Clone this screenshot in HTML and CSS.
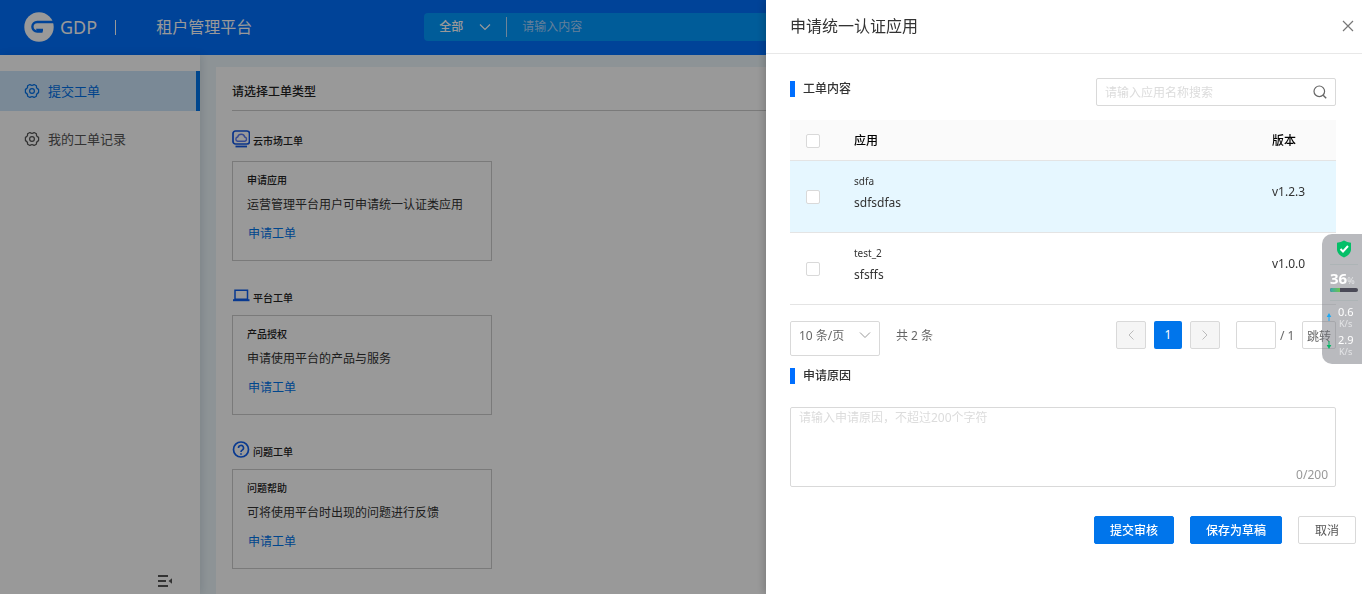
FILE: index.html
```html
<!DOCTYPE html>
<html lang="zh-CN">
<head>
<meta charset="utf-8">
<title>租户管理平台</title>
<link rel="stylesheet" href="styles.css">
</head>
<body>
<div class="app">
  <header class="topbar">
    <svg class="logo" viewBox="0 0 30 30" aria-hidden="true">
      <circle cx="15" cy="15" r="14.7" fill="#fff"/>
      <path d="M30 10H13.200a4.800 4.800 0 0 0 0 9.600H18.500" fill="none" stroke="#0070fd" stroke-width="2.400"/>
      <path d="M12 16.700h7v2.900h-6z" fill="#0070fd"/>
    </svg>
    <span class="brand">GDP</span>
    <span class="bar"></span>
    <h1 class="product">租户管理平台</h1>
    <form class="search">
      <span class="scope">
        <select class="scope-select" aria-label="范围"><option>全部</option></select>
        <svg class="chevron" viewBox="0 0 12 12" aria-hidden="true"><path d="M1 3.500l5 5 5-5" fill="none" stroke="#fff" stroke-width="1.200"/></svg>
      </span>
      <input class="search-input" type="text" placeholder="请输入内容" aria-label="搜索内容">
    </form>
  </header>
  <div class="workspace">
    <nav class="sidebar">
      <a class="nav-item active" href="#">
        <svg class="gear" viewBox="0 0 16 16" aria-hidden="true"><path d="M5.900 1.500Q8 3.200 10.100 1.500L12.400 2.800Q12 5.300 14.600 6.400V9.600Q12 10.700 12.400 13.200L10.100 14.500Q8 12.800 5.900 14.500L3.600 13.200Q4 10.700 1.400 9.600V6.400Q4 5.300 3.600 2.800Z" stroke-linejoin="round"/><circle cx="8" cy="8" r="2.400"/></svg>
        提交工单</a>
      <a class="nav-item" href="#">
        <svg class="gear" viewBox="0 0 16 16" aria-hidden="true"><path d="M5.900 1.500Q8 3.200 10.100 1.500L12.400 2.800Q12 5.300 14.600 6.400V9.600Q12 10.700 12.400 13.200L10.100 14.500Q8 12.800 5.900 14.500L3.600 13.200Q4 10.700 1.400 9.600V6.400Q4 5.300 3.600 2.800Z" stroke-linejoin="round"/><circle cx="8" cy="8" r="2.400"/></svg>
        我的工单记录</a>
      <button class="collapse" type="button" aria-label="收起菜单">
        <svg viewBox="0 0 16 14" aria-hidden="true"><path d="M1 2h10M1 7h8M1 12h10" fill="none" stroke="#555" stroke-width="1.800"/><path d="M15 4.200v5.600l-3.500-2.800z" fill="#555"/></svg>
      </button>
    </nav>
    <main class="content">
      <section class="panel">
        <h2 class="panel-title">请选择工单类型</h2>
        <section class="group market">
          <h3 class="group-title">
            <svg viewBox="0 0 18 18" aria-hidden="true"><rect x="1" y="1" width="16.500" height="13" rx="2.500" fill="none" stroke="#1257e6" stroke-width="1.700"/><path d="M5.500 11.300a2.200 2.200 0 0 1 .2-4.300 3.600 3.600 0 0 1 7 0 2.200 2.200 0 0 1 .2 4.300z" fill="none" stroke="#5b7cf0" stroke-width="1.400"/><path d="M3.500 16.500h11.500" stroke="#1257e6" stroke-width="1.800"/></svg>
            云市场工单</h3>
          <article class="card">
            <h4 class="card-title">申请应用</h4>
            <p class="card-text">运营管理平台用户可申请统一认证类应用</p>
            <a class="card-link" href="#">申请工单</a>
          </article>
        </section>
        <section class="group">
          <h3 class="group-title">
            <svg viewBox="0 0 18 18" aria-hidden="true"><path d="M3 3.200h12.500v9H3z" fill="none" stroke="#0e5ff0" stroke-width="1.500"/><path d="M1 13.200h16.500" stroke="#0e5ff0" stroke-width="2"/></svg>
            平台工单</h3>
          <article class="card">
            <h4 class="card-title">产品授权</h4>
            <p class="card-text">申请使用平台的产品与服务</p>
            <a class="card-link" href="#">申请工单</a>
          </article>
        </section>
        <section class="group">
          <h3 class="group-title">
            <svg viewBox="0 0 18 18" aria-hidden="true"><circle cx="9" cy="8.500" r="7.500" fill="none" stroke="#0e5ff0" stroke-width="1.700"/><path d="M6.500 7a2.500 2.500 0 1 1 3.700 2.100q-1.200.7-1.200 1.900" fill="none" stroke="#0e5ff0" stroke-width="1.600"/><path d="M9 12.200v1.600" stroke="#0e5ff0" stroke-width="1.600"/></svg>
            问题工单</h3>
          <article class="card">
            <h4 class="card-title">问题帮助</h4>
            <p class="card-text">可将使用平台时出现的问题进行反馈</p>
            <a class="card-link" href="#">申请工单</a>
          </article>
        </section>
      </section>
    </main>
  </div>
</div>

<div class="mask">
  <aside class="drawer" role="dialog" aria-labelledby="drawer-title">
    <header class="drawer-head">
      <h2 class="drawer-title" id="drawer-title">申请统一认证应用</h2>
      <button class="close" type="button" aria-label="关闭"><svg viewBox="0 0 12 12" aria-hidden="true"><path d="M1 1l10 10M11 1L1 11" stroke="#777" stroke-width="1.200"/></svg></button>
    </header>
    <div class="drawer-body">
      <div class="row-head">
        <h3 class="section-title">工单内容</h3>
        <label class="app-search">
          <input type="text" placeholder="请输入应用名称搜索" aria-label="应用名称">
          <svg viewBox="0 0 14 14" aria-hidden="true"><circle cx="6.300" cy="6.300" r="5.300" fill="none" stroke="#666" stroke-width="1.200"/><path d="M10.200 10.200l3 3" stroke="#666" stroke-width="1.400"/></svg>
        </label>
      </div>
      <table class="apps">
        <thead>
          <tr><th class="pick"><input type="checkbox" aria-label="全选"></th><th>应用</th><th class="version">版本</th></tr>
        </thead>
        <tbody>
          <tr class="hover"><td class="pick"><input type="checkbox" aria-label="sdfa"></td><td class="info"><div class="name">sdfa</div><div>sdfsdfas</div></td><td class="version">v1.2.3</td></tr>
          <tr><td class="pick"><input type="checkbox" aria-label="test_2"></td><td class="info"><div class="name">test_2</div><div>sfsffs</div></td><td class="version">v1.0.0</td></tr>
        </tbody>
      </table>
      <div class="pager">
        <span class="page-size">
          <select aria-label="每页条数"><option>10 条/页</option></select>
          <svg class="chevron" viewBox="0 0 12 12" aria-hidden="true"><path d="M1 3.500l5 5 5-5" fill="none" stroke="#999"/></svg>
        </span>
        <span class="total">共 2 条</span>
        <div class="pages">
          <button class="page" type="button" disabled aria-label="上一页"><svg viewBox="0 0 12 12" aria-hidden="true"><path d="M8.500 1.500L4 6l4.500 4.500" fill="none" stroke="#bbb"/></svg></button>
          <button class="page current" type="button">1</button>
          <button class="page" type="button" disabled aria-label="下一页"><svg viewBox="0 0 12 12" aria-hidden="true"><path d="M3.500 1.500L8 6l-4.500 4.500" fill="none" stroke="#bbb"/></svg></button>
        </div>
        <div class="jump">
          <input type="text" aria-label="页码">
          <span class="of">/ 1</span>
          <button type="button">跳转</button>
        </div>
      </div>
      <h3 class="section-title">申请原因</h3>
      <div class="reason">
        <textarea placeholder="请输入申请原因，不超过200个字符" aria-label="申请原因"></textarea>
        <span class="count">0/200</span>
      </div>
    </div>
    <footer class="actions">
      <button class="btn primary" type="button">提交审核</button>
      <button class="btn primary" type="button">保存为草稿</button>
      <button class="btn" type="button">取消</button>
    </footer>
  </aside>
</div>

<div class="monitor">
  <div class="shield">
    <svg viewBox="0 0 16 18" aria-hidden="true"><path d="M8 0.500Q11 2.500 15 2.800V10Q14.500 14.500 8 17.500 1.500 14.500 1 10V2.800Q5 2.500 8 .5z" fill="#04bf68"/><path d="M4.500 9l2.500 2.500L12 6" fill="none" stroke="#fff" stroke-width="2"/></svg>
  </div>
  <div class="usage">
    <div class="percent"><b>36</b><small>%</small></div>
    <div class="meter"><span class="meter-fill" style="width:36%"></span></div>
  </div>
  <div class="net">
    <svg viewBox="0 0 6 8" aria-hidden="true"><path d="M3 8V3" stroke="#1ba8f5"/><path d="M3 0l2.300 4H.7z" fill="#1ba8f5"/></svg>
    <div class="rate"><span>0.6</span><small>K/s</small></div>
  </div>
  <div class="net">
    <svg viewBox="0 0 6 8" aria-hidden="true"><path d="M3 0v5" stroke="#04b565"/><path d="M3 8l2.300-4H.7z" fill="#04b565"/></svg>
    <div class="rate"><span>2.9</span><small>K/s</small></div>
  </div>
</div>
</body>
</html>
```

FILE: styles.css
```css
* { box-sizing: border-box; }
html, body { height: 100%; }
body {
  margin: 0;
  overflow: hidden;
  font: 12px/20px "Noto Sans", "Noto Sans CJK SC", sans-serif;
  color: #333;
}
h1, h2, h3, h4, p { margin: 0; font-size: 12px; font-weight: 400; }
a { text-decoration: none; }
svg { display: block; flex: none; }
button, input, select, textarea { font: inherit; color: inherit; margin: 0; }
button { padding: 0; cursor: pointer; }
select { appearance: none; }

.app { display: flex; flex-direction: column; height: 100%; }

.topbar {
  display: flex;
  align-items: center;
  flex: none;
  height: 55px;
  padding: 0 24px 1px;
  background: #0070fd;
  color: #fff;
}
.logo { width: 30px; height: 30px; }
.brand { margin-left: 6px; font-size: 18px; }
.bar { width: 1px; height: 15px; margin: 0 40px 0 18px; background: #fff; }
.product { font-size: 16px; }
.search {
  display: flex;
  align-items: center;
  width: 500px;
  height: 28px;
  margin-left: 172px;
  padding-left: 15px;
  border-radius: 4px;
  background: #0099ff;
}
.scope {
  display: flex;
  align-items: center;
  justify-content: space-between;
  width: 68px;
  height: 20px;
  padding-right: 15px;
  border-right: 1px solid #b8dcff;
}
.scope-select { width: 36px; padding: 0; border: 0; background: none; font-weight: 500; }
.chevron { width: 12px; height: 12px; pointer-events: none; }
.search-input { flex: 1; min-width: 0; padding: 0 15px; border: 0; background: none; }
.search-input::placeholder { color: #a6d4ff; }

.workspace { display: flex; flex: 1; min-height: 0; background: #ecf6fa; }
.sidebar {
  display: flex;
  flex-direction: column;
  flex: none;
  gap: 8px;
  width: 200px;
  padding-top: 16px;
  background: #fff;
  box-shadow: 2px 0 8px rgba(0, 40, 70, .12);
}
.nav-item {
  display: flex;
  align-items: center;
  gap: 8px;
  height: 40px;
  padding-left: 24px;
  font-size: 13px;
  color: #555;
}
.nav-item.active { background: #cbe5fb; border-right: 4px solid #0075eb; color: #0070e8; }
.gear { width: 16px; height: 16px; fill: none; stroke: currentColor; stroke-width: 1.2; }
.collapse { align-self: flex-end; margin: auto 27px 6px 0; border: 0; background: none; }
.collapse svg { width: 16px; height: 14px; }

.content { flex: 1; min-width: 0; padding: 12px 16px 0; }
.panel { height: 100%; padding: 15px 16px 0; background: #fff; }
.panel-title { padding-bottom: 8px; border-bottom: 1px solid #ccc; font-weight: 500; color: #222; }
.group { margin-top: 25px; }
.group.market { margin-top: 18px; }
.group-title {
  display: flex;
  align-items: center;
  gap: 3px;
  height: 24px;
  margin-bottom: 5px;
  font-size: 10px;
  font-weight: 500;
  color: #222;
}
.group.market .group-title { margin-bottom: 8px; }
.group-title svg { width: 18px; height: 18px; margin-bottom: 4px; }
.card {
  width: 260px;
  height: 100px;
  padding: 8px 14px;
  border: 1px solid #ccc;
}
.card-title { font-size: 10px; font-weight: 500; color: #222; }
.card-text { margin: 5px 0 9px; }
.card-link { display: block; padding-left: 1px; color: #0075eb; }

.mask { position: fixed; inset: 0; background: rgba(0, 0, 0, .4); }
.drawer {
  width: 596px;
  max-width: 100%;
  height: 100%;
  margin-left: auto;
  overflow: auto;
  background: #fff;
  box-shadow: -2px 0 8px rgba(0, 0, 0, .2);
}
.drawer-head {
  display: flex;
  align-items: center;
  justify-content: space-between;
  height: 54px;
  padding: 0 8px 2px 24px;
  border-bottom: 1px solid #e8e8e8;
}
.drawer-title { font-size: 16px; }
.close { border: 0; background: none; }
.close svg { width: 12px; height: 12px; }
.drawer-body { padding: 24px 26px 0 24px; }
.row-head { display: flex; align-items: flex-start; justify-content: space-between; margin-bottom: 14px; }
.section-title { display: flex; align-items: center; gap: 8px; height: 22px; font-weight: 500; }
.section-title::before { content: ""; width: 5px; height: 16px; background: #006fff; }
.app-search {
  display: flex;
  align-items: center;
  width: 240px;
  height: 28px;
  padding: 0 8px;
  border: 1px solid #d9d9d9;
  border-radius: 2px;
}
.app-search input { flex: 1; min-width: 0; padding: 1px 0 0; border: 0; outline: 0; }
.app-search svg { width: 14px; height: 14px; }
::placeholder { color: #dcdcdc; opacity: 1; }

.apps { width: 100%; table-layout: fixed; border-spacing: 0; }
.apps th, .apps td { padding: 0; text-align: left; border-bottom: 1px solid #e4e4e4; }
.apps th { height: 41px; padding-top: 2px; background: #fafafa; color: #000; font-weight: 500; }
.apps td { height: 72px; }
.apps .hover td { background: #e6f7ff; }
.apps .pick { width: 64px; padding-left: 16px; }
.apps .version { width: 64px; }
.apps td.version { padding-bottom: 10px; }
.apps .info { padding: 9px 0 18px; line-height: 22px; }
.apps .name { font-size: 10px; }
.apps input {
  display: block;
  appearance: none;
  width: 14px;
  height: 14px;
  border: 1px solid #d9d9d9;
  border-radius: 2px;
  background: #fff;
}

.pager { display: flex; align-items: flex-start; margin: 16px 0 9px; line-height: 28px; color: #666; }
.page-size { display: flex; position: relative; width: 90px; height: 35px; }
.page-size select {
  width: 100%;
  padding: 0 8px 6px;
  border: 1px solid #d9d9d9;
  border-radius: 2px;
  background: #fff;
}
.page-size .chevron { position: absolute; right: 9px; top: 8px; }
.total { margin-left: 16px; line-height: 30px; }
.pages { display: flex; gap: 8px; margin-left: auto; }
.page {
  display: grid;
  place-items: center;
  width: 30px;
  height: 28px;
  border: 1px solid #d9d9d9;
  border-radius: 2px;
  background: #f5f5f5;
}
.page svg { width: 12px; height: 12px; }
.page.current { width: 28px; border: 0; background: #0075eb; color: #fff; }
.jump { display: flex; margin-left: 16px; line-height: 30px; }
.jump input { width: 40px; height: 28px; border: 1px solid #d9d9d9; border-radius: 2px; }
.jump .of { width: 26px; padding-left: 4px; }
.jump button { width: 34px; height: 28px; border: 1px solid #d9d9d9; border-radius: 2px; background: #fff; }

.reason { position: relative; margin-top: 20px; }
.reason textarea {
  display: block;
  width: 100%;
  height: 80px;
  padding: 0 8px;
  border: 1px solid #d9d9d9;
  border-radius: 2px;
  resize: none;
}
.count { position: absolute; right: 8px; bottom: 2px; color: #999; }
.actions { display: flex; justify-content: flex-end; gap: 16px; padding: 29px 6px 0 0; }
.btn {
  height: 28px;
  padding: 1px 16px 0;
  border: 1px solid #d9d9d9;
  border-radius: 2px;
  background: #fff;
  color: #555;
}
.btn.primary { padding: 1px 15px 0; border-color: #0075eb; background: #0075eb; color: #fff; font-weight: 500; }

.monitor {
  position: fixed;
  top: 234px;
  right: 0;
  width: 40px;
  height: 130px;
  padding: 6px 4px 0 8px;
  border-radius: 10px 0 0 10px;
  background: rgba(115, 117, 125, .5);
  color: #fff;
}
.shield { display: flex; justify-content: center; height: 25px; border-bottom: 1px solid #adb4b6; }
.shield svg { width: 16px; height: 18px; }
.usage { height: 36px; padding-top: 4px; border-bottom: 1px solid #adb4b6; }
.percent { display: flex; align-items: baseline; height: 19px; line-height: 19px; }
.percent b { font-size: 15px; }
.percent small { font-size: 9px; color: #e4e5e7; }
.meter { height: 4px; border-radius: 2px; background: #4b4a57; overflow: hidden; }
.meter-fill { display: block; height: 100%; background: linear-gradient(90deg, #3aa7ae, #6cc24f); }
.net { display: flex; align-items: flex-end; justify-content: space-between; height: 28px; }
.net svg { width: 6px; height: 8px; margin: 0 0 8px -4px; }
.rate { display: flex; flex-direction: column; width: 20px; line-height: 12px; font-size: 11px; }
.rate small { font-size: 9px; line-height: 11px; color: #e4e5e7; padding-left: 1px; }
```
